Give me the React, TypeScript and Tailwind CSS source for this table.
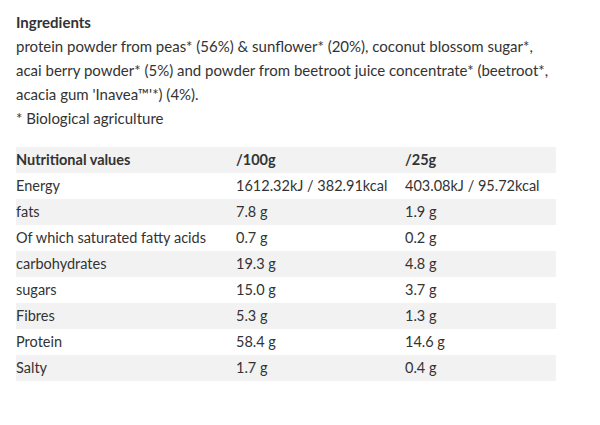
const rows: [string, string, string][] = [
  ["Energy", "1612.32kJ / 382.91kcal", "403.08kJ / 95.72kcal"],
  ["fats", "7.8 g", "1.9 g"],
  ["Of which saturated fatty acids", "0.7 g", "0.2 g"],
  ["carbohydrates", "19.3 g", "4.8 g"],
  ["sugars", "15.0 g", "3.7 g"],
  ["Fibres", "5.3 g", "1.3 g"],
  ["Protein", "58.4 g", "14.6 g"],
  ["Salty", "1.7 g", "0.4 g"],
];

export default function App() {
  return (
    <div className="w-[600px] h-[425px] bg-white text-[#333333] font-['Lato',sans-serif] text-[15px] pt-[10px] pl-4">
      <div className="leading-[24px]">
        <p className="font-bold">Ingredients</p>
        <p>
          protein powder from peas* (56%) &amp; sunflower* (20%), coconut blossom sugar*,
          <br />
          acai berry powder* (5%) and powder from beetroot juice concentrate* (beetroot*,
          <br />
          acacia gum 'Inavea™'*) (4%).
        </p>
        <p>* Biological agriculture</p>
      </div>
      <table className="mt-[17px] w-[540px] border-collapse text-[14.5px]">
        <thead>
          <tr className="bg-[#f2f2f2] h-[26px]">
            <th className="w-[220px] p-0 text-left font-bold">Nutritional values</th>
            <th className="w-[169px] p-0 text-left font-bold">/100g</th>
            <th className="p-0 text-left font-bold">/25g</th>
          </tr>
        </thead>
        <tbody>
          {rows.map((r, i) => (
            <tr key={r[0]} className={i % 2 === 1 ? "bg-[#f2f2f2] h-[26px]" : "h-[26px]"}>
              <td className="p-0">{r[0]}</td>
              <td className="p-0">{r[1]}</td>
              <td className="p-0">{r[2]}</td>
            </tr>
          ))}
        </tbody>
      </table>
    </div>
  );
}
